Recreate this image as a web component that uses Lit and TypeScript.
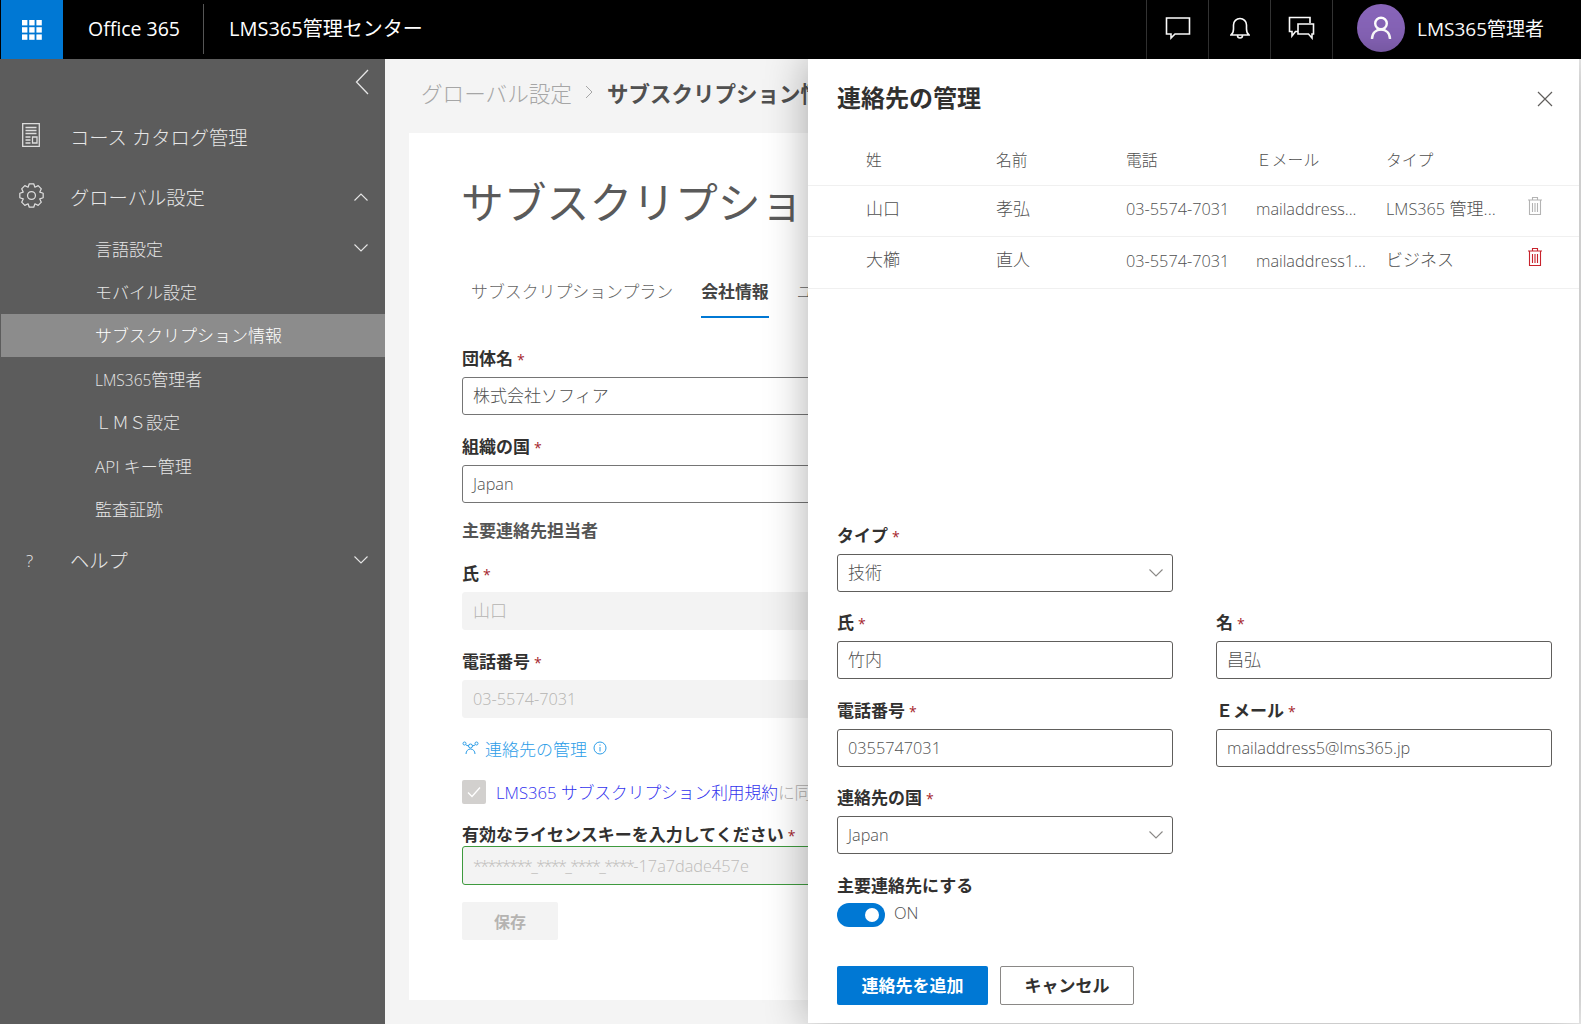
import { LitElement, html, css, svg } from "lit";
import { customElement } from "lit/decorators.js";

const chev = (up = false) => html`<svg class="chev" viewBox="0 0 16 10" width="16" height="10"><path d=${up ? "M1.5 8.5 8 2l6.5 6.5" : "M1.5 1.5 8 8l6.5-6.5"} fill="none" stroke="currentColor" stroke-width="1.1"/></svg>`;
const trash = (c: string) => html`<svg viewBox="0 0 16 20" width="16" height="20" fill="none" stroke=${c} stroke-width="1.1"><path d="M1 4h14M5.500 4V1.500h5V4M2.500 4v14.500h11V4M5.500 7v9M8 7v9M10.500 7v9"/></svg>`;

const gearPath = (() => {
  const pts: string[] = [];
  const n = 8;
  for (let i = 0; i < n; i++) {
    const a = (i * Math.PI * 2) / n - Math.PI / 2;
    const s = (Math.PI * 2) / n;
    const p = (r: number, d: number) => `${(12 + r * Math.cos(a + d * s)).toFixed(2)} ${(12 + r * Math.sin(a + d * s)).toFixed(2)}`;
    pts.push(`${i ? "L" : "M"}${p(8.6, -0.5)}`, `L${p(11.4, -0.24)}`, `L${p(11.4, 0.24)}`, `L${p(8.6, 0.5)}`);
  }
  return pts.join(" ") + "Z";
})();

@customElement("app-root")
export class AppRoot extends LitElement {
  static styles = css`
    :host { display: block; width: 1581px; height: 1024px; overflow: hidden; position: relative; background: #5c5c5c;
      font-family: "Open Sans", "Noto Sans CJK JP", sans-serif; color: #323130; box-sizing: border-box; }
    * { box-sizing: border-box; }
    .top { height: 59px; background: #000; color: #fff; display: flex; align-items: stretch; padding-left: 1px; }
    .waffle { width: 62px; background: #0078d4; display: flex; align-items: center; justify-content: center; }
    .brand { margin-left: 25px; font-size: 19.500px; line-height: 57px; width: 115px; }
    .brand-div { width: 1px; height: 50px; margin-top: 4px; background: #555; }
    .app { margin-left: 25px; font-size: 20px; line-height: 57px; flex: 1; }
    .tool { width: 62px; border-left: 1px solid #333; display: flex; align-items: center; justify-content: center; padding-bottom: 3px; }
    .me { width: 249px; border-left: 1px solid #333; display: flex; align-items: center; padding: 0 0 3px 24px; gap: 12px; font-size: 19px; }
    .avatar { width: 48px; height: 48px; border-radius: 50%; background: #8764b8; display: flex; align-items: center; justify-content: center; }
    .body { display: flex; height: 965px; padding-left: 1px; }
    nav { width: 384px; background: #5c5c5c; color: #e6e6e6; display: flex; flex-direction: column; font-weight: 300; }
    .collapse { height: 48px; display: flex; justify-content: flex-end; align-items: center; padding: 0 16px 2px 0; }
    .item { display: flex; align-items: center; height: 60px; font-size: 19.300px; padding-right: 16px; }
    .item.last { height: 59px; }
    .item .ic { width: 69px; padding-left: 21px; display: flex; align-items: center; height: 100%; }
    .item .t { flex: 1; }
    .cat { margin-top: -4px; }
    .gear { margin: -4px 0 0 -3px; }
    .q { margin-left: 4px; font-size: 17px; }
    .sub { display: flex; align-items: center; height: 43.400px; padding: 0 16px 1px 94px; font-size: 17px; }
    .sub .t { flex: 1; }
    .sub .nar { font-size: 15.500px; }
    .sub.on { background: #8c8c8c; color: #fff; }
    main { flex: 1; background: #f4f4f4; padding: 0 24px; min-width: 0; }
    .crumbs { height: 74px; display: flex; align-items: center; gap: 13px; font-size: 21.600px; color: #a6a6a6; padding: 0 12px 8px; white-space: nowrap; font-weight: 300; }
    .crumbs b { color: #505050; font-weight: 700; font-size: 21.500px; }
    .card { background: #fff; height: 867px; padding: 36px 53px; overflow: hidden; }
    h1 { margin: 0 0 0 -1px; font-size: 42.800px; line-height: 68px; font-weight: 400; color: #5a5a5a; white-space: nowrap; }
    .tabs { display: flex; gap: 28px; margin-top: 30px; height: 51px; padding-left: 9px; font-size: 16.900px; color: #666; white-space: nowrap; font-weight: 300; }
    .tabs span { height: 51px; line-height: 50px; }
    .tabs .on { font-weight: 700; color: #444; border-bottom: 2px solid #0078d4; }
    .lab { font-size: 17px; font-weight: 700; line-height: 24px; color: #323130; white-space: nowrap; margin-bottom: 5px; }
    .lab i { color: #a4262c; font-style: normal; font-weight: 400; margin-left: 4px; font-size: 14px; }
    .f { display: flex; flex-direction: column; }
    .inp { height: 38px; width: 100%; border: 1px solid #757575; border-radius: 3px; background: #fff; padding: 0 10px; font-size: 17px; line-height: 36px; color: #505050; display: flex; align-items: center; white-space: nowrap; font-weight: 300; }
    .inp.la { font-size: 16.300px; }
    .inp .t { flex: 1; }
    .inp .chev { color: #8a8886; margin-right: -2px; }
    .dis { border-color: #f3f3f3; background: #f3f3f3; color: #b5b3b1; }
    .form { width: 700px; }
    .form .f { margin-bottom: 19.500px; }
    .sect { font-size: 17px; font-weight: 700; color: #555; line-height: 24px; margin: -3px 0 19px; }
    .manage { color: #2b9de8; font-size: 17px; display: flex; align-items: center; gap: 6px; height: 24px; margin-top: -1px; font-weight: 300; white-space: nowrap; }
    .agree { display: flex; align-items: center; gap: 10px; margin-top: 19px; height: 26px; font-size: 16.700px; color: #3333ee; white-space: nowrap; font-weight: 300; }
    .agree em { font-style: normal; color: #b5b3b1; }
    .box { width: 24px; height: 24px; background: #d2d0ce; border-radius: 2px; display: flex; align-items: center; justify-content: center; }
    .form .key { margin: 18px 0 17px; }
    .key .lab { margin-bottom: -2px; }
    .key .inp { border-color: #3e9a3e; background: #f3f3f3; color: #bdbbb9; height: 39px; }
    .stars { letter-spacing: -1.700px; }
    .save { width: 96px; height: 38px; background: #f3f3f3; color: #b5b3b1; font-size: 16px; font-weight: 700; border-radius: 2px; display: flex; align-items: center; justify-content: center; }
    .panel { position: absolute; left: 808px; top: 59px; width: 771px; height: 964px; background: #fff; box-shadow: 0 0 40px rgba(0,0,0,.32); display: flex; flex-direction: column; }
    .panel .inp { border-color: #605e5c; }
    .phead { height: 78px; padding: 0 29px 3px; display: flex; align-items: center; justify-content: space-between; }
    .phead h2 { margin: 0; font-size: 24px; font-weight: 700; color: #323130; }
    .phead svg { margin-right: -3px; margin-top: 5px; }
    .row { display: grid; grid-template-columns: 58px 130px 130px 130px 130px 141px 1fr; height: 51.500px; padding-bottom: 7px; align-items: center; border-bottom: 1px solid #f0f0f0; font-size: 17px; color: #505050; font-weight: 300; white-space: nowrap; }
    .row.h { height: 48.500px; font-size: 15.800px; padding-bottom: 3px; }
    .row .l { font-size: 16.300px; }
    .row > .l { padding-top: 4px; }
    .row svg { display: block; margin-top: -3px; }
    .pform { flex: 1; padding: 0 29px; display: grid; grid-template-columns: 336px 336px; column-gap: 43px; align-content: start; margin-top: 235px; }
    .pform .f { height: 87.500px; }
    .tog { display: flex; align-items: center; gap: 9px; font-size: 16.500px; color: #505050; font-weight: 300; }
    .tog span { margin-top: -4px; }
    .sw { width: 48px; height: 24px; border-radius: 12px; background: #0078d4; position: relative; }
    .sw::after { content: ""; position: absolute; right: 6px; top: 5px; width: 14px; height: 14px; border-radius: 50%; background: #fff; }
    .pbtns { display: flex; gap: 12px; padding: 0 29px; margin-bottom: 18px; }
    .btn { height: 39px; display: flex; align-items: center; justify-content: center; font-size: 17px; font-weight: 700; border-radius: 2px; padding-bottom: 2px; }
    .pri { width: 151px; background: #0078d4; color: #fff; }
    .sec { width: 134px; border: 1px solid #8a8886; color: #323130; }
  `;

  render() {
    const dots = [0, 1, 2].flatMap((y) => [0, 1, 2].map((x) => svg`<rect x=${x * 7.2} y=${y * 7.2} width="5.400" height="5.400" fill="#fff"/>`));
    return html`
      <header class="top">
        <div class="waffle"><svg width="20" height="20" viewBox="0 0 20 20">${dots}</svg></div>
        <div class="brand">Office 365</div>
        <div class="brand-div"></div>
        <div class="app">LMS365管理センター</div>
        <div class="tool"><svg width="26" height="24" viewBox="0 0 26 24" fill="none" stroke="#fff" stroke-width="1.600"><path d="M1.500 2h23v16H10l-4 4v-4H1.500z"/></svg></div>
        <div class="tool"><svg width="20" height="24" viewBox="0 0 20 24" fill="none" stroke="#fff" stroke-width="1.600"><path d="M1 19c2-1.500 2.500-3 2.500-6V9a6.500 6.500 0 0 1 13 0v4c0 3 .5 4.500 2.500 6zM7.500 19.500a2.500 2.500 0 0 0 5 0"/></svg></div>
        <div class="tool"><svg width="27" height="24" viewBox="0 0 27 24" fill="none" stroke="#fff" stroke-width="1.600"><path d="M22 7V1.500H1.500v14H4V20l3.500-4.500H10"/><path d="M10 8h15.500v10H24v4l-3.500-4H10z"/></svg></div>
        <div class="me"><div class="avatar"><svg width="22" height="24" viewBox="0 0 22 24" fill="none" stroke="#fff" stroke-width="2.400"><circle cx="11" cy="7.500" r="5.800"/><path d="M2 23c0-6 4-9.500 9-9.500s9 3.500 9 9.500"/></svg></div>LMS365管理者</div>
      </header>
      <div class="body">
        <nav>
          <div class="collapse"><svg width="14" height="26" viewBox="0 0 14 26"><path d="M13 1 1.500 13 13 25" fill="none" stroke="#e6e6e6" stroke-width="1.300"/></svg></div>
          <div class="item"><div class="ic"><svg class="cat" width="18" height="24" viewBox="0 0 18 24" fill="none" stroke="#ddd" stroke-width="1.300"><path d="M.7.700h16.600v22.600H.7zM3.500 4.500h11M3.500 7.500h11M3.500 10.500h11M3.500 14h5M3.500 17h5M3.500 20h5M10.500 14h4.500v6h-4.500z"/></svg></div><span class="t">コース カタログ管理</span></div>
          <div class="item"><div class="ic"><svg class="gear" width="25" height="25" viewBox="0 0 24 24" fill="none" stroke="#ddd" stroke-width="1.200" stroke-linejoin="round"><circle cx="12" cy="12" r="3.800"/><path d=${gearPath}/></svg></div><span class="t">グローバル設定</span>${chev(true)}</div>
          <div class="sub"><span class="t">言語設定</span>${chev()}</div>
          <div class="sub"><span class="t">モバイル設定</span></div>
          <div class="sub on"><span class="t">サブスクリプション情報</span></div>
          <div class="sub"><span class="t"><span class="nar">LMS365</span>管理者</span></div>
          <div class="sub"><span class="t">ＬＭＳ設定</span></div>
          <div class="sub"><span class="t">API キー管理</span></div>
          <div class="sub"><span class="t">監査証跡</span></div>
          <div class="item last"><div class="ic"><span class="q">?</span></div><span class="t">ヘルプ</span>${chev()}</div>
        </nav>
        <main>
          <div class="crumbs">グローバル設定 <svg width="9" height="14" viewBox="0 0 9 14"><path d="M1 1l6 6-6 6" fill="none" stroke="#a6a6a6"/></svg> <b>サブスクリプション情報</b></div>
          <div class="card">
            <h1>サブスクリプション情報</h1>
            <div class="tabs"><span>サブスクリプションプラン</span><span class="on">会社情報</span><span>ユーザー</span></div>
            <div class="form">
              <div class="f" style="margin-top:29px"><div class="lab">団体名<i>*</i></div><div class="inp">株式会社ソフィア</div></div>
              <div class="f"><div class="lab">組織の国<i>*</i></div><div class="inp la">Japan</div></div>
              <div class="sect">主要連絡先担当者</div>
              <div class="f"><div class="lab">氏<i>*</i></div><div class="inp dis">山口</div></div>
              <div class="f"><div class="lab">電話番号<i>*</i></div><div class="inp dis la">03-5574-7031</div></div>
              <div class="manage"><svg width="17" height="14" viewBox="0 0 17 14" fill="none" stroke="#2b9de8"><circle cx="2.500" cy="2.500" r="1.500"/><circle cx="14.500" cy="2.500" r="1.500"/><circle cx="8.500" cy="5" r="2"/><path d="M4 4l2.500 1M13 4l-2.500 1M4 13c0-3 2-5 4.500-5s4.500 2 4.500 5"/></svg>連絡先の管理 <svg width="14" height="14" viewBox="0 0 14 14" fill="none" stroke="#2b9de8"><circle cx="7" cy="7" r="6"/><path d="M7 6v4.500M7 3.500v1.200"/></svg></div>
              <div class="agree"><div class="box"><svg width="14" height="12" viewBox="0 0 14 12"><path d="M1 6.500 5 10.500 13 1.500" fill="none" stroke="#fff" stroke-width="1.300"/></svg></div><span>LMS365 サブスクリプション利用規約<em>に同意します</em></span></div>
              <div class="f key"><div class="lab">有効なライセンスキーを入力してください<i>*</i></div><div class="inp la"><span class="stars">********_****_****_****</span>-17a7dade457e</div></div>
              <div class="save">保存</div>
            </div>
          </div>
        </main>
      </div>
      <aside class="panel">
        <div class="phead"><h2>連絡先の管理</h2><svg width="16" height="16" viewBox="0 0 16 16"><path d="M1 1l14 14M15 1 1 15" stroke="#605e5c" stroke-width="1.200" fill="none"/></svg></div>
        <div class="row h"><span></span><span>姓</span><span>名前</span><span>電話</span><span>Ｅメール</span><span>タイプ</span><span></span></div>
        <div class="row"><span></span><span>山口</span><span>孝弘</span><span class="l">03-5574-7031</span><span class="l">mailaddress...</span><span><span class="l">LMS365</span> 管理...</span><span>${trash("#b3b3b3")}</span></div>
        <div class="row"><span></span><span>大櫛</span><span>直人</span><span class="l">03-5574-7031</span><span class="l">mailaddress1...</span><span>ビジネス</span><span>${trash("#c8232c")}</span></div>
        <div class="pform">
          <div class="f"><div class="lab">タイプ<i>*</i></div><div class="inp"><span class="t">技術</span>${chev()}</div></div><div></div>
          <div class="f"><div class="lab">氏<i>*</i></div><div class="inp">竹内</div></div>
          <div class="f"><div class="lab">名<i>*</i></div><div class="inp">昌弘</div></div>
          <div class="f"><div class="lab">電話番号<i>*</i></div><div class="inp la">0355747031</div></div>
          <div class="f"><div class="lab">Ｅメール<i>*</i></div><div class="inp la">mailaddress5@lms365.jp</div></div>
          <div class="f"><div class="lab">連絡先の国<i>*</i></div><div class="inp la"><span class="t">Japan</span>${chev()}</div></div><div></div>
          <div><div class="lab">主要連絡先にする</div><div class="tog"><div class="sw"></div><span>ON</span></div></div>
        </div>
        <div class="pbtns"><div class="btn pri">連絡先を追加</div><div class="btn sec">キャンセル</div></div>
      </aside>
    `;
  }
}
